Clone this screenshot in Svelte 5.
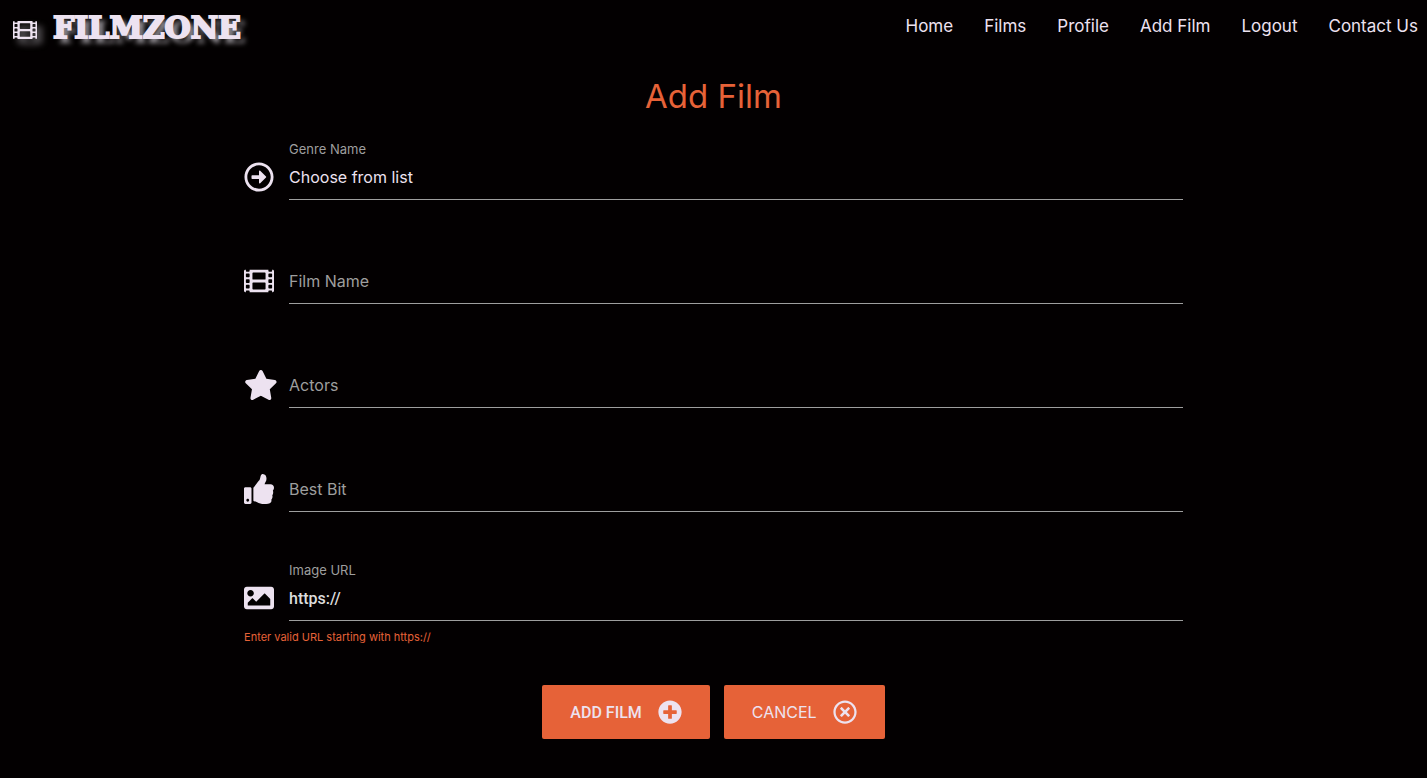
<script>
  const links = ['Home', 'Films', 'Profile', 'Add Film', 'Logout', 'Contact Us'];

  const icons = {
    film: {
      width: 512,
      path: 'M488 64h-8v20c0 6.600-5.400 12-12 12h-40c-6.600 0-12-5.400-12-12V64H96v20c0 6.600-5.400 12-12 12H44c-6.600 0-12-5.400-12-12V64h-8C10.700 64 0 74.700 0 88v336c0 13.300 10.700 24 24 24h8v-20c0-6.600 5.400-12 12-12h40c6.600 0 12 5.400 12 12v20h320v-20c0-6.600 5.400-12 12-12h40c6.600 0 12 5.400 12 12v20h8c13.300 0 24-10.700 24-24V88c0-13.300-10.700-24-24-24zM96 372c0 6.600-5.400 12-12 12H44c-6.600 0-12-5.400-12-12v-40c0-6.600 5.400-12 12-12h40c6.600 0 12 5.400 12 12v40zm0-96c0 6.600-5.400 12-12 12H44c-6.600 0-12-5.400-12-12v-40c0-6.600 5.400-12 12-12h40c6.600 0 12 5.400 12 12v40zm0-96c0 6.600-5.400 12-12 12H44c-6.600 0-12-5.400-12-12v-40c0-6.600 5.400-12 12-12h40c6.600 0 12 5.400 12 12v40zm272 208c0 6.600-5.400 12-12 12H156c-6.600 0-12-5.400-12-12v-96c0-6.600 5.400-12 12-12h200c6.600 0 12 5.400 12 12v96zm0-168c0 6.600-5.400 12-12 12H156c-6.600 0-12-5.400-12-12v-96c0-6.600 5.400-12 12-12h200c6.600 0 12 5.400 12 12v96zm112 152c0 6.600-5.400 12-12 12h-40c-6.600 0-12-5.400-12-12v-40c0-6.600 5.400-12 12-12h40c6.600 0 12 5.400 12 12v40zm0-96c0 6.600-5.400 12-12 12h-40c-6.600 0-12-5.400-12-12v-40c0-6.600 5.400-12 12-12h40c6.600 0 12 5.400 12 12v40zm0-96c0 6.600-5.400 12-12 12h-40c-6.600 0-12-5.400-12-12v-40c0-6.600 5.400-12 12-12h40c6.600 0 12 5.400 12 12v40z'
    },
    arrow: {
      width: 512,
      path: 'M504 256C504 119 393 8 256 8S8 119 8 256s111 248 248 248 248-111 248-248zm-448 0c0-110.500 89.500-200 200-200s200 89.500 200 200-89.500 200-200 200S56 366.500 56 256zm72 20v-40c0-6.600 5.400-12 12-12h116v-67c0-10.700 12.900-16 20.500-8.500l99 99c4.700 4.700 4.700 12.300 0 17l-99 99c-7.600 7.600-20.500 2.200-20.500-8.500v-67H140c-6.600 0-12-5.400-12-12z'
    },
    star: {
      width: 576,
      path: 'M259.3 17.8L194 150.2 47.9 171.5c-26.2 3.8-36.7 36.1-17.7 54.6l105.7 103-25 145.5c-4.5 26.3 23.2 46 46.4 33.7L288 439.6l130.7 68.7c23.2 12.2 50.9-7.4 46.4-33.7l-25-145.5 105.7-103c19-18.5 8.5-50.8-17.7-54.6L382 150.2 316.7 17.8c-11.7-23.6-45.6-23.900-57.4 0z'
    },
    thumb: {
      width: 512,
      path: 'M104 224H24c-13.255 0-24 10.745-24 24v240c0 13.255 10.745 24 24 24h80c13.255 0 24-10.745 24-24V248c0-13.255-10.745-24-24-24zM64 472c-13.255 0-24-10.745-24-24s10.745-24 24-24 24 10.745 24 24-10.745 24-24 24zM384 81.452c0 42.416-25.970 66.208-33.277 94.548h101.723c33.397 0 59.397 27.746 59.553 58.098.084 17.938-7.546 37.249-19.439 49.197l-.11.11c9.836 23.337 8.237 56.037-9.308 79.469 8.681 25.895-.069 57.704-16.382 74.757 4.298 17.598 2.244 32.575-6.148 44.632C440.202 511.587 389.616 512 346.839 512l-2.845-.001c-48.287-.017-87.806-17.598-119.560-31.725-15.957-7.099-36.821-15.887-52.651-16.178-6.540-.12-11.783-5.457-11.783-11.998v-213.770c0-3.200 1.282-6.271 3.558-8.521 39.614-39.144 56.648-80.587 89.117-113.111 14.804-14.832 20.188-37.236 25.393-58.902C282.515 39.293 291.817 0 312 0c24 0 72 8 72 81.452z'
    },
    image: {
      width: 512,
      path: 'M464 448H48c-26.510 0-48-21.490-48-48V112c0-26.510 21.490-48 48-48h416c26.510 0 48 21.490 48 48v288c0 26.510-21.490 48-48 48zM112 120c-30.928 0-56 25.072-56 56s25.072 56 56 56 56-25.072 56-56-25.072-56-56-56zM64 384h384V272l-87.515-87.515c-4.686-4.686-12.284-4.686-16.971 0L208 320l-55.515-55.515c-4.686-4.686-12.284-4.686-16.971 0L64 336v48z'
    },
    plus: {
      width: 512,
      path: 'M256 8C119 8 8 119 8 256s111 248 248 248 248-111 248-248S393 8 256 8zm144 276c0 6.600-5.400 12-12 12h-92v92c0 6.600-5.400 12-12 12h-56c-6.600 0-12-5.400-12-12v-92h-92c-6.600 0-12-5.400-12-12v-56c0-6.600 5.400-12 12-12h92v-92c0-6.600 5.400-12 12-12h56c6.600 0 12 5.400 12 12v92h92c6.600 0 12 5.400 12 12v56z'
    },
    times: {
      width: 512,
      path: 'M256 8C119 8 8 119 8 256s111 248 248 248 248-111 248-248S393 8 256 8zm0 448c-110.500 0-200-89.500-200-200S145.500 56 256 56s200 89.500 200 200-89.500 200-200 200zm101.800-262.200L295.600 256l62.200 62.200c4.700 4.700 4.700 12.300 0 17l-22.600 22.600c-4.700 4.700-12.300 4.700-17 0L256 295.600l-62.200 62.200c-4.700 4.700-12.300 4.700-17 0l-22.600-22.600c-4.700-4.700-4.700-12.300 0-17l62.200-62.200-62.200-62.200c-4.700-4.700-4.700-12.300 0-17l22.600-22.600c4.700-4.700 12.300-4.700 17 0l62.200 62.200 62.200-62.200c4.700-4.700 12.300-4.700 17 0l22.600 22.600c4.700 4.700 4.700 12.300 0 17z'
    }
  };

  const textFields = [
    { id: 'film_name', label: 'Film Name', icon: 'film' },
    { id: 'actors', label: 'Actors', icon: 'star' },
    { id: 'best_bit', label: 'Best Bit', icon: 'thumb' }
  ];

  let values = $state({ film_name: '', actors: '', best_bit: '' });
  let imageUrl = $state('https://');
</script>

{#snippet icon(name)}
  <svg class="icon" viewBox="0 0 {icons[name].width} 512" aria-hidden="true">
    <path d={icons[name].path} />
  </svg>
{/snippet}

<header>
  <a class="logo" href="#home">
    {@render icon('film')}
    <span>FILMZONE</span>
  </a>
  <nav>
    {#each links as link}
      <a href="#{link.toLowerCase().replace(' ', '-')}">{link}</a>
    {/each}
  </nav>
</header>

<main>
  <h1>Add Film</h1>
  <form onsubmit={(event) => event.preventDefault()}>
    <div class="field">
      {@render icon('arrow')}
      <label class="raised" for="genre">Genre Name</label>
      <select id="genre">
        <option>Choose from list</option>
      </select>
    </div>

    {#each textFields as field}
      <div class="field">
        {@render icon(field.icon)}
        <label class:raised={values[field.id]} for={field.id}>{field.label}</label>
        <input id={field.id} type="text" bind:value={values[field.id]} />
      </div>
    {/each}

    <div class="field url">
      {@render icon('image')}
      <label class="raised" for="image_url">Image URL</label>
      <input id="image_url" type="url" bind:value={imageUrl} aria-describedby="url_help" />
      <p id="url_help">Enter valid URL starting with https://</p>
    </div>

    <div class="actions">
      <button class="submit" type="submit">ADD FILM {@render icon('plus')}</button>
      <a class="cancel" href="#films">CANCEL {@render icon('times')}</a>
    </div>
  </form>
</main>

<style>
  :global(body) {
    margin: 0;
    background: #030001;
    color: #ede2f0;
    font-family: Inter, 'Open Sans', sans-serif;
  }

  a {
    color: inherit;
    text-decoration: none;
  }

  .icon {
    display: block;
    height: 30px;
    fill: #ede2f0;
  }

  header {
    display: flex;
    justify-content: space-between;
    padding: 0 9px 0 13px;
  }

  .logo {
    display: flex;
    align-items: center;
    gap: 16px;
    height: 56px;
    font: bold 30px/56px 'DejaVu Serif', serif;
    -webkit-text-stroke: 2px #ede2f0;
    text-shadow: 5px 5px 5px #a09ca2;
  }

  .logo .icon {
    height: 24px;
    margin-top: 4px;
    filter: drop-shadow(5px 5px 3px #777378);
  }

  nav {
    display: flex;
    gap: 31px;
    font-size: 17px;
    line-height: 52px;
  }

  main {
    box-sizing: border-box;
    width: 70%;
    margin: 0 auto;
    padding: 20px 30px;
  }

  h1 {
    margin: 0 0 27px;
    color: #e66238;
    font-size: 33px;
    font-weight: 400;
    line-height: 40px;
    text-align: center;
  }

  .field {
    display: grid;
    grid-template-columns: 45px 1fr;
    grid-template-rows: 12px 45px;
    margin-bottom: 47px;
  }

  .field .icon {
    grid-area: 2 / 1;
    place-self: center start;
    margin-bottom: 2px;
  }

  label {
    z-index: 1;
    grid-area: 2 / 2;
    justify-self: start;
    color: #9e9e9e;
    font-size: 16px;
    line-height: 44px;
    pointer-events: none;
  }

  label.raised {
    grid-area: 1 / 2;
    font-size: 13px;
    line-height: 12px;
  }

  input,
  select {
    grid-area: 2 / 2;
    box-sizing: border-box;
    width: 100%;
    min-width: 0;
    height: 45px;
    margin: 0;
    padding: 0;
    border: 0;
    border-bottom: 1px solid #9e9e9e;
    border-radius: 0;
    outline: 0;
    background: transparent;
    color: #ede2f0;
    font: 400 16px Inter, sans-serif;
    appearance: none;
  }

  option {
    background: #030001;
  }

  .url {
    margin: 52px 0 40px;
  }

  .url input {
    color: #dddddd;
    font-family: Roboto, sans-serif;
    font-weight: 500;
  }

  p {
    grid-column: 1 / 3;
    margin: 8px 0 0;
    color: #e66238;
    font-size: 11px;
    line-height: 16px;
  }

  .actions {
    display: flex;
    flex-wrap: wrap;
    justify-content: center;
    gap: 14px;
  }

  .submit,
  .cancel {
    display: flex;
    align-items: center;
    gap: 16px;
    box-sizing: border-box;
    height: 54px;
    padding: 0 28px;
    border: 0;
    border-radius: 2px;
    background: #e66238;
    color: #ede2f0;
    font: 400 16px Inter, sans-serif;
    cursor: pointer;
  }

  .submit {
    font-family: Roboto, sans-serif;
    font-weight: 500;
  }

  .actions .icon {
    height: 24px;
  }
</style>
